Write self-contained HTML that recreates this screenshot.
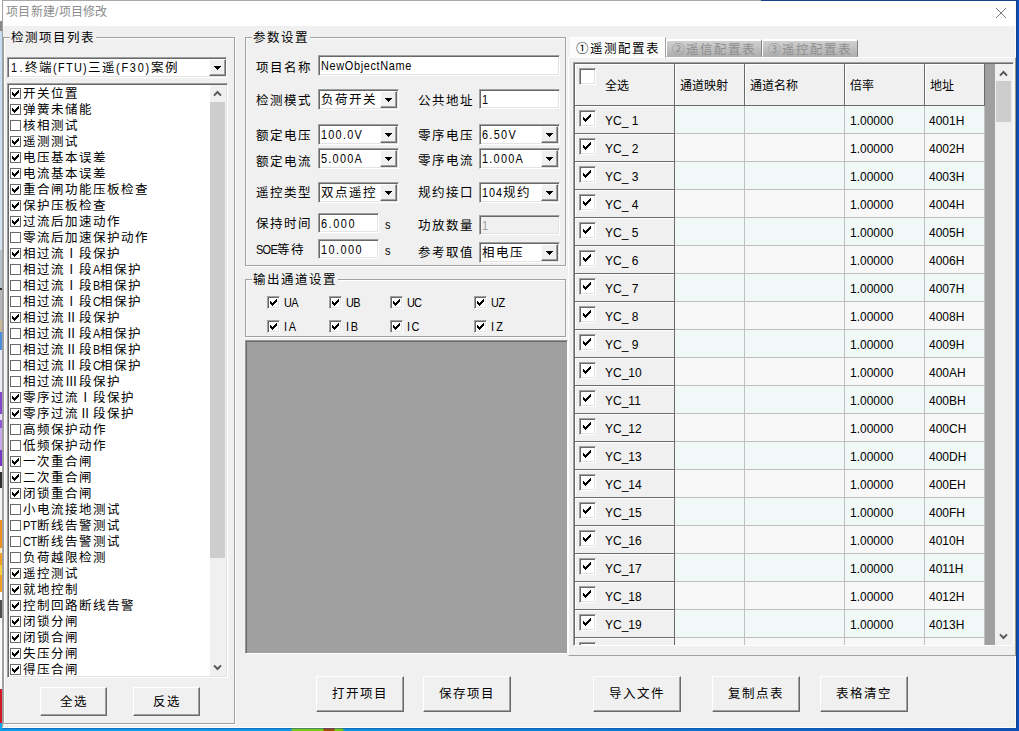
<!DOCTYPE html><html lang="zh-CN"><head><meta charset="utf-8"><title>项目新建/项目修改</title><style>
*{box-sizing:border-box;margin:0;padding:0}
html,body{width:1019px;height:731px;overflow:hidden}
body{position:relative;background:#0a4fc0;font-family:"Liberation Sans",sans-serif;font-size:12.5px;color:#000;line-height:1}
.a{position:absolute}
.l{display:inline-block;font-family:"Liberation Sans",sans-serif;font-size:13px;transform:scaleX(.84);transform-origin:0 50%;position:relative;top:0;white-space:nowrap}
.c{letter-spacing:1px;white-space:nowrap}
#win{left:2px;top:0;width:1014px;height:728px;background:#f0f0f0;border-left:1px solid #a0a0a0;border-top:1px solid #a8a8a8;border-right:1px solid #fffbf5;border-bottom:1px solid #fffbf5}
#title{left:3px;top:1px;width:1012px;height:25px;background:#fff}
#ttext{left:6px;top:6px;font-size:12px;color:#8c8c8c;white-space:nowrap;letter-spacing:.25px}
.gb{border:1px solid #a0a0a0;box-shadow:1px 1px 0 #fff, inset 1px 1px 0 #fff}
.gbl{background:#f0f0f0;padding:0 1px 0 1px;height:14px;line-height:14px;margin-top:1px}
.sunk{border:1px solid;border-color:#a0a0a0 #fff #fff #a0a0a0;box-shadow:inset 1px 1px 0 #696969, inset -1px -1px 0 #e3e3e3;background:#fff}
.btn{background:#f0f0f0;border:1px solid;border-color:#fff #696969 #696969 #fff;box-shadow:inset -1px -1px 0 #a0a0a0;text-align:center;letter-spacing:1px;white-space:nowrap}
.dd{width:17px;height:17px;background:#f0f0f0;border:1px solid;border-color:#fff #696969 #696969 #fff;box-shadow:inset -1px -1px 0 #a0a0a0}
.dd:after{content:"";position:absolute;left:4px;top:6px;width:7px;height:4px;background:linear-gradient(#000,#000) 0 0/7px 1px no-repeat,linear-gradient(#000,#000) 1px 1px/5px 1px no-repeat,linear-gradient(#000,#000) 2px 2px/3px 1px no-repeat,linear-gradient(#000,#000) 3px 3px/1px 1px no-repeat}
.cb{width:11px;height:11px;border:1px solid #6a6a6a;background:#fff}
.cb3{width:13px;height:13px;border:1px solid;border-color:#a0a0a0 #fff #fff #a0a0a0;box-shadow:inset 1px 1px 0 #696969, inset -1px -1px 0 #e3e3e3;background:#fff}
.cb4{width:17px;height:17px;border:1px solid;border-color:#a0a0a0 #fff #fff #a0a0a0;box-shadow:inset 1px 1px 0 #696969, inset -1px -1px 0 #e3e3e3;background:#fff}
svg.ck{position:absolute;left:0;top:0;width:100%;height:100%;fill:none;stroke:#000;stroke-width:2}
svg.ckp{position:absolute;left:1px;top:1px;fill:#000}
.cb3 svg.ckp{left:2px;top:2px}
.cb4 svg.ckp{left:3px;top:3px}
.it{left:0;height:16px;line-height:16px;white-space:nowrap;letter-spacing:1px;margin-top:1px}
.lab{white-space:nowrap;letter-spacing:1px;height:14px;line-height:14px;margin-top:1px}
.tx{white-space:nowrap;height:14px;line-height:14px;margin-top:1px}
.t{font-size:12px;white-space:nowrap;height:14px;line-height:14px}
.hc{background:#f0f0f0;border-right:1px solid #696969;border-bottom:1px solid #696969;box-shadow:inset 1px 1px 0 #fff}
.rc{border-right:1px solid #c0c0c0;border-bottom:1px solid #c0c0c0}
</style></head><body>
<div class="a" style="left:0;top:0;width:2px;height:731px;background:linear-gradient(#fff 0px,#fff 21px,#8a8a8a 21px,#8a8a8a 31px,#c4dcf4 31px,#d4e4f4 250px,#b8c0c8 250px,#b8c0c8 288px,#303030 288px,#303030 290px,#b4b8bc 290px,#b4b8bc 320px,#c8b898 320px,#c8b898 332px,#4a90e0 332px,#4a90e0 350px,#ececf4 350px,#ececf4 392px,#8448d0 392px,#8448d0 414px,#e8e0f8 414px,#e8e0f8 420px,#9058d8 420px,#9058d8 428px,#c8a8ec 428px,#c8a8ec 450px,#7838c8 450px,#7838c8 466px,#fff 466px,#fff 472px,#303030 472px,#303030 488px,#f4f4f4 488px,#f4f4f4 520px,#f09020 520px,#f09020 548px,#fff0d0 548px,#fff0d0 553px,#f0a028 553px,#f0a028 565px,#f8d040 565px,#f8d040 575px,#f0a028 575px,#f0a028 592px,#fff 592px,#fff 600px,#505050 600px,#505050 618px,#fafafa 618px,#fafafa 689px,#d01828 689px,#d01828 723px,#10a8f0 723px,#10a8f0 731px)"></div>
<div class="a" style="left:0;top:728px;width:1019px;height:3px;background:linear-gradient(90deg,#0c9cec 0,#0c98e8 290px,#78c820 293px,#78c820 323px,#a04810 324px,#a04810 334px,#78c820 335px,#78c820 342px,#0c90e0 345px,#0a78d4 600px,#0a50b8 1019px)"></div>
<div class="a" style="left:3px;top:728px;width:1014px;height:1px;background:#1a4a90;opacity:.5"></div>
<div class="a" style="left:1016px;top:0;width:1px;height:729px;background:#1a3f88"></div>
<div class="a" id="win"></div>
<div class="a" style="left:761px;top:0;width:256px;height:1px;background:#1c3f8c"></div>
<div class="a" id="title"></div>
<div class="a" id="ttext">项目新建/项目修改</div>
<svg class="a" style="left:995px;top:7px" width="12" height="12" viewBox="0 0 12 12"><path d="M1 1L11 11M11 1L1 11" stroke="#787878" stroke-width="1" fill="none"/></svg>
<div class="a gb" style="left:3px;top:37px;width:232px;height:687px"></div>
<div class="a gbl c" style="left:10px;top:30px">检测项目列表</div>
<div class="a sunk" style="left:7px;top:57px;width:220px;height:21px"></div>
<div class="a tx c" style="left:11px;top:60px"><span class="l" style="letter-spacing:2.91px;margin-right:-2.67px">1.</span>终端<span class="l" style="letter-spacing:1.55px;margin-right:-6.67px">(FTU)</span>三遥<span class="l" style="letter-spacing:2.12px;margin-right:-6.67px">(F30)</span>案例</div>
<div class="a dd" style="left:209px;top:59px"></div>
<div class="a sunk" style="left:7px;top:83px;width:221px;height:595px"></div>
<div class="a" style="left:9px;top:85px;width:200px;height:591px;overflow:hidden">
<div class="a cb" style="left:1px;top:3px"><svg class="ckp" width="7" height="7" viewBox="0 0 7 7" shape-rendering="crispEdges"><path d="M0 2v3h1v-3zM1 3v3h1v-3zM2 4v3h1v-3zM3 3v3h1v-3zM4 2v3h1v-3zM5 1v3h1v-3zM6 0v3h1v-3z"/></svg></div><div class="a it" style="left:14px;top:0px">开关位置</div>
<div class="a cb" style="left:1px;top:19px"><svg class="ckp" width="7" height="7" viewBox="0 0 7 7" shape-rendering="crispEdges"><path d="M0 2v3h1v-3zM1 3v3h1v-3zM2 4v3h1v-3zM3 3v3h1v-3zM4 2v3h1v-3zM5 1v3h1v-3zM6 0v3h1v-3z"/></svg></div><div class="a it" style="left:14px;top:16px">弹簧未储能</div>
<div class="a cb" style="left:1px;top:35px"></div><div class="a it" style="left:14px;top:32px">核相测试</div>
<div class="a cb" style="left:1px;top:51px"><svg class="ckp" width="7" height="7" viewBox="0 0 7 7" shape-rendering="crispEdges"><path d="M0 2v3h1v-3zM1 3v3h1v-3zM2 4v3h1v-3zM3 3v3h1v-3zM4 2v3h1v-3zM5 1v3h1v-3zM6 0v3h1v-3z"/></svg></div><div class="a it" style="left:14px;top:48px">遥测测试</div>
<div class="a cb" style="left:1px;top:67px"><svg class="ckp" width="7" height="7" viewBox="0 0 7 7" shape-rendering="crispEdges"><path d="M0 2v3h1v-3zM1 3v3h1v-3zM2 4v3h1v-3zM3 3v3h1v-3zM4 2v3h1v-3zM5 1v3h1v-3zM6 0v3h1v-3z"/></svg></div><div class="a it" style="left:14px;top:64px">电压基本误差</div>
<div class="a cb" style="left:1px;top:83px"><svg class="ckp" width="7" height="7" viewBox="0 0 7 7" shape-rendering="crispEdges"><path d="M0 2v3h1v-3zM1 3v3h1v-3zM2 4v3h1v-3zM3 3v3h1v-3zM4 2v3h1v-3zM5 1v3h1v-3zM6 0v3h1v-3z"/></svg></div><div class="a it" style="left:14px;top:80px">电流基本误差</div>
<div class="a cb" style="left:1px;top:99px"><svg class="ckp" width="7" height="7" viewBox="0 0 7 7" shape-rendering="crispEdges"><path d="M0 2v3h1v-3zM1 3v3h1v-3zM2 4v3h1v-3zM3 3v3h1v-3zM4 2v3h1v-3zM5 1v3h1v-3zM6 0v3h1v-3z"/></svg></div><div class="a it" style="left:14px;top:96px">重合闸功能压板检查</div>
<div class="a cb" style="left:1px;top:115px"><svg class="ckp" width="7" height="7" viewBox="0 0 7 7" shape-rendering="crispEdges"><path d="M0 2v3h1v-3zM1 3v3h1v-3zM2 4v3h1v-3zM3 3v3h1v-3zM4 2v3h1v-3zM5 1v3h1v-3zM6 0v3h1v-3z"/></svg></div><div class="a it" style="left:14px;top:112px">保护压板检查</div>
<div class="a cb" style="left:1px;top:131px"><svg class="ckp" width="7" height="7" viewBox="0 0 7 7" shape-rendering="crispEdges"><path d="M0 2v3h1v-3zM1 3v3h1v-3zM2 4v3h1v-3zM3 3v3h1v-3zM4 2v3h1v-3zM5 1v3h1v-3zM6 0v3h1v-3z"/></svg></div><div class="a it" style="left:14px;top:128px">过流后加速动作</div>
<div class="a cb" style="left:1px;top:147px"></div><div class="a it" style="left:14px;top:144px">零流后加速保护动作</div>
<div class="a cb" style="left:1px;top:163px"><svg class="ckp" width="7" height="7" viewBox="0 0 7 7" shape-rendering="crispEdges"><path d="M0 2v3h1v-3zM1 3v3h1v-3zM2 4v3h1v-3zM3 3v3h1v-3zM4 2v3h1v-3zM5 1v3h1v-3zM6 0v3h1v-3z"/></svg></div><div class="a it" style="left:14px;top:160px">相过流Ⅰ段保护</div>
<div class="a cb" style="left:1px;top:179px"></div><div class="a it" style="left:14px;top:176px">相过流Ⅰ段<span class="l" style="letter-spacing:-0.34px;margin-right:-1.33px">A</span>相保护</div>
<div class="a cb" style="left:1px;top:195px"></div><div class="a it" style="left:14px;top:192px">相过流Ⅰ段<span class="l" style="letter-spacing:-0.34px;margin-right:-1.33px">B</span>相保护</div>
<div class="a cb" style="left:1px;top:211px"></div><div class="a it" style="left:14px;top:208px">相过流Ⅰ段<span class="l" style="letter-spacing:-1.05px;margin-right:-1.33px">C</span>相保护</div>
<div class="a cb" style="left:1px;top:227px"><svg class="ckp" width="7" height="7" viewBox="0 0 7 7" shape-rendering="crispEdges"><path d="M0 2v3h1v-3zM1 3v3h1v-3zM2 4v3h1v-3zM3 3v3h1v-3zM4 2v3h1v-3zM5 1v3h1v-3zM6 0v3h1v-3z"/></svg></div><div class="a it" style="left:14px;top:224px">相过流Ⅱ段保护</div>
<div class="a cb" style="left:1px;top:243px"></div><div class="a it" style="left:14px;top:240px">相过流Ⅱ段<span class="l" style="letter-spacing:-0.34px;margin-right:-1.33px">A</span>相保护</div>
<div class="a cb" style="left:1px;top:259px"></div><div class="a it" style="left:14px;top:256px">相过流Ⅱ段<span class="l" style="letter-spacing:-0.34px;margin-right:-1.33px">B</span>相保护</div>
<div class="a cb" style="left:1px;top:275px"></div><div class="a it" style="left:14px;top:272px">相过流Ⅱ段<span class="l" style="letter-spacing:-1.05px;margin-right:-1.33px">C</span>相保护</div>
<div class="a cb" style="left:1px;top:291px"></div><div class="a it" style="left:14px;top:288px">相过流Ⅲ段保护</div>
<div class="a cb" style="left:1px;top:307px"><svg class="ckp" width="7" height="7" viewBox="0 0 7 7" shape-rendering="crispEdges"><path d="M0 2v3h1v-3zM1 3v3h1v-3zM2 4v3h1v-3zM3 3v3h1v-3zM4 2v3h1v-3zM5 1v3h1v-3zM6 0v3h1v-3z"/></svg></div><div class="a it" style="left:14px;top:304px">零序过流Ⅰ段保护</div>
<div class="a cb" style="left:1px;top:323px"><svg class="ckp" width="7" height="7" viewBox="0 0 7 7" shape-rendering="crispEdges"><path d="M0 2v3h1v-3zM1 3v3h1v-3zM2 4v3h1v-3zM3 3v3h1v-3zM4 2v3h1v-3zM5 1v3h1v-3zM6 0v3h1v-3z"/></svg></div><div class="a it" style="left:14px;top:320px">零序过流Ⅱ段保护</div>
<div class="a cb" style="left:1px;top:339px"></div><div class="a it" style="left:14px;top:336px">高频保护动作</div>
<div class="a cb" style="left:1px;top:355px"></div><div class="a it" style="left:14px;top:352px">低频保护动作</div>
<div class="a cb" style="left:1px;top:371px"><svg class="ckp" width="7" height="7" viewBox="0 0 7 7" shape-rendering="crispEdges"><path d="M0 2v3h1v-3zM1 3v3h1v-3zM2 4v3h1v-3zM3 3v3h1v-3zM4 2v3h1v-3zM5 1v3h1v-3zM6 0v3h1v-3z"/></svg></div><div class="a it" style="left:14px;top:368px">一次重合闸</div>
<div class="a cb" style="left:1px;top:387px"><svg class="ckp" width="7" height="7" viewBox="0 0 7 7" shape-rendering="crispEdges"><path d="M0 2v3h1v-3zM1 3v3h1v-3zM2 4v3h1v-3zM3 3v3h1v-3zM4 2v3h1v-3zM5 1v3h1v-3zM6 0v3h1v-3z"/></svg></div><div class="a it" style="left:14px;top:384px">二次重合闸</div>
<div class="a cb" style="left:1px;top:403px"><svg class="ckp" width="7" height="7" viewBox="0 0 7 7" shape-rendering="crispEdges"><path d="M0 2v3h1v-3zM1 3v3h1v-3zM2 4v3h1v-3zM3 3v3h1v-3zM4 2v3h1v-3zM5 1v3h1v-3zM6 0v3h1v-3z"/></svg></div><div class="a it" style="left:14px;top:400px">闭锁重合闸</div>
<div class="a cb" style="left:1px;top:419px"></div><div class="a it" style="left:14px;top:416px">小电流接地测试</div>
<div class="a cb" style="left:1px;top:435px"></div><div class="a it" style="left:14px;top:432px"><span class="l" style="letter-spacing:0.03px;margin-right:-2.67px">PT</span>断线告警测试</div>
<div class="a cb" style="left:1px;top:451px"></div><div class="a it" style="left:14px;top:448px"><span class="l" style="letter-spacing:-0.33px;margin-right:-2.67px">CT</span>断线告警测试</div>
<div class="a cb" style="left:1px;top:467px"></div><div class="a it" style="left:14px;top:464px">负荷越限检测</div>
<div class="a cb" style="left:1px;top:483px"><svg class="ckp" width="7" height="7" viewBox="0 0 7 7" shape-rendering="crispEdges"><path d="M0 2v3h1v-3zM1 3v3h1v-3zM2 4v3h1v-3zM3 3v3h1v-3zM4 2v3h1v-3zM5 1v3h1v-3zM6 0v3h1v-3z"/></svg></div><div class="a it" style="left:14px;top:480px">遥控测试</div>
<div class="a cb" style="left:1px;top:499px"><svg class="ckp" width="7" height="7" viewBox="0 0 7 7" shape-rendering="crispEdges"><path d="M0 2v3h1v-3zM1 3v3h1v-3zM2 4v3h1v-3zM3 3v3h1v-3zM4 2v3h1v-3zM5 1v3h1v-3zM6 0v3h1v-3z"/></svg></div><div class="a it" style="left:14px;top:496px">就地控制</div>
<div class="a cb" style="left:1px;top:515px"><svg class="ckp" width="7" height="7" viewBox="0 0 7 7" shape-rendering="crispEdges"><path d="M0 2v3h1v-3zM1 3v3h1v-3zM2 4v3h1v-3zM3 3v3h1v-3zM4 2v3h1v-3zM5 1v3h1v-3zM6 0v3h1v-3z"/></svg></div><div class="a it" style="left:14px;top:512px">控制回路断线告警</div>
<div class="a cb" style="left:1px;top:531px"><svg class="ckp" width="7" height="7" viewBox="0 0 7 7" shape-rendering="crispEdges"><path d="M0 2v3h1v-3zM1 3v3h1v-3zM2 4v3h1v-3zM3 3v3h1v-3zM4 2v3h1v-3zM5 1v3h1v-3zM6 0v3h1v-3z"/></svg></div><div class="a it" style="left:14px;top:528px">闭锁分闸</div>
<div class="a cb" style="left:1px;top:547px"><svg class="ckp" width="7" height="7" viewBox="0 0 7 7" shape-rendering="crispEdges"><path d="M0 2v3h1v-3zM1 3v3h1v-3zM2 4v3h1v-3zM3 3v3h1v-3zM4 2v3h1v-3zM5 1v3h1v-3zM6 0v3h1v-3z"/></svg></div><div class="a it" style="left:14px;top:544px">闭锁合闸</div>
<div class="a cb" style="left:1px;top:563px"><svg class="ckp" width="7" height="7" viewBox="0 0 7 7" shape-rendering="crispEdges"><path d="M0 2v3h1v-3zM1 3v3h1v-3zM2 4v3h1v-3zM3 3v3h1v-3zM4 2v3h1v-3zM5 1v3h1v-3zM6 0v3h1v-3z"/></svg></div><div class="a it" style="left:14px;top:560px">失压分闸</div>
<div class="a cb" style="left:1px;top:579px"><svg class="ckp" width="7" height="7" viewBox="0 0 7 7" shape-rendering="crispEdges"><path d="M0 2v3h1v-3zM1 3v3h1v-3zM2 4v3h1v-3zM3 3v3h1v-3zM4 2v3h1v-3zM5 1v3h1v-3zM6 0v3h1v-3z"/></svg></div><div class="a it" style="left:14px;top:576px">得压合闸</div>
</div>
<div class="a" style="left:210px;top:85px;width:16px;height:591px;background:#f0f0f0"></div>
<div class="a" style="left:210px;top:102px;width:15px;height:456px;background:#cdcdcd"></div>
<svg class="a" style="left:213px;top:90px" width="9" height="7" viewBox="0 0 9 7"><path d="M1 5.6L4.5 2L8 5.6" stroke="#585858" stroke-width="2" fill="none"/></svg>
<svg class="a" style="left:213px;top:664px" width="9" height="7" viewBox="0 0 9 7"><path d="M1 1.4L4.5 5L8 1.4" stroke="#585858" stroke-width="2" fill="none"/></svg>
<div class="a btn" style="left:40px;top:687px;width:67px;height:29px;line-height:28px">全选</div>
<div class="a btn" style="left:133px;top:687px;width:67px;height:29px;line-height:28px">反选</div>
<div class="a gb" style="left:245px;top:37px;width:321px;height:229px"></div>
<div class="a gbl c" style="left:252px;top:30px">参数设置</div>
<div class="a lab" style="left:256px;top:60px">项目名称</div>
<div class="a lab" style="left:256px;top:93px">检测模式</div>
<div class="a lab" style="left:256px;top:128px">额定电压</div>
<div class="a lab" style="left:256px;top:154px">额定电流</div>
<div class="a lab" style="left:256px;top:185px">遥控类型</div>
<div class="a lab" style="left:256px;top:216px">保持时间</div>
<div class="a lab" style="left:256px;top:242px"><span class="l" style="letter-spacing:-0.82px;margin-right:-4.00px">SOE</span>等待</div>
<div class="a lab" style="left:418px;top:93px">公共地址</div>
<div class="a lab" style="left:418px;top:128px">零序电压</div>
<div class="a lab" style="left:418px;top:153px">零序电流</div>
<div class="a lab" style="left:418px;top:185px">规约接口</div>
<div class="a lab" style="left:418px;top:218px">功放数量</div>
<div class="a lab" style="left:418px;top:245px">参考取值</div>
<div class="a sunk" style="left:318px;top:55px;width:242px;height:21px"></div>
<div class="a tx c" style="left:321px;top:58px"><span class="l" style="letter-spacing:0.78px;margin-right:-17.33px">NewObjectName</span></div>
<div class="a sunk" style="left:318px;top:89px;width:81px;height:21px"></div>
<div class="a tx c" style="left:321px;top:92px">负荷开关</div>
<div class="a dd" style="left:380px;top:91px"></div>
<div class="a sunk" style="left:479px;top:89px;width:81px;height:20px"></div>
<div class="a tx c" style="left:482px;top:92px"><span class="l" style="letter-spacing:1.10px;margin-right:-1.33px">1</span></div>
<div class="a sunk" style="left:318px;top:124px;width:81px;height:21px"></div>
<div class="a tx c" style="left:321px;top:127px"><span class="l" style="letter-spacing:1.47px;margin-right:-8.00px">100.0V</span></div>
<div class="a dd" style="left:380px;top:126px"></div>
<div class="a sunk" style="left:479px;top:124px;width:81px;height:21px"></div>
<div class="a tx c" style="left:482px;top:127px"><span class="l" style="letter-spacing:1.54px;margin-right:-6.67px">6.50V</span></div>
<div class="a dd" style="left:541px;top:126px"></div>
<div class="a sunk" style="left:318px;top:148px;width:81px;height:21px"></div>
<div class="a tx c" style="left:321px;top:151px"><span class="l" style="letter-spacing:1.47px;margin-right:-8.00px">5.000A</span></div>
<div class="a dd" style="left:380px;top:150px"></div>
<div class="a sunk" style="left:479px;top:148px;width:81px;height:21px"></div>
<div class="a tx c" style="left:482px;top:151px"><span class="l" style="letter-spacing:1.47px;margin-right:-8.00px">1.000A</span></div>
<div class="a dd" style="left:541px;top:150px"></div>
<div class="a sunk" style="left:318px;top:182px;width:81px;height:21px"></div>
<div class="a tx c" style="left:321px;top:185px">双点遥控</div>
<div class="a dd" style="left:380px;top:184px"></div>
<div class="a sunk" style="left:479px;top:182px;width:81px;height:21px"></div>
<div class="a tx c" style="left:482px;top:185px"><span class="l" style="letter-spacing:1.10px;margin-right:-4.00px">104</span>规约</div>
<div class="a dd" style="left:541px;top:184px"></div>
<div class="a sunk" style="left:318px;top:213px;width:61px;height:20px"></div>
<div class="a tx c" style="left:321px;top:216px"><span class="l" style="letter-spacing:1.83px;margin-right:-6.67px">6.000</span></div>
<div class="a sunk" style="left:479px;top:215px;width:81px;height:20px;background:#f0f0f0"></div>
<div class="a tx c" style="left:482px;top:218px;color:#a0a0a0"><span class="l" style="letter-spacing:1.10px;margin-right:-1.33px">1</span></div>
<div class="a sunk" style="left:318px;top:239px;width:61px;height:20px"></div>
<div class="a tx c" style="left:321px;top:242px"><span class="l" style="letter-spacing:1.71px;margin-right:-8.00px">10.000</span></div>
<div class="a sunk" style="left:479px;top:242px;width:81px;height:21px"></div>
<div class="a tx c" style="left:482px;top:245px">相电压</div>
<div class="a dd" style="left:541px;top:244px"></div>
<div class="a tx" style="left:385px;top:217px"><span class="l" style="letter-spacing:1.83px;margin-right:-1.33px">s</span></div>
<div class="a tx" style="left:385px;top:243px"><span class="l" style="letter-spacing:1.83px;margin-right:-1.33px">s</span></div>
<div class="a gb" style="left:245px;top:279px;width:321px;height:58px"></div>
<div class="a gbl c" style="left:252px;top:272px">输出通道设置</div>
<div class="a cb3" style="left:267px;top:296px"><svg class="ckp" width="7" height="7" viewBox="0 0 7 7" shape-rendering="crispEdges"><path d="M0 2v3h1v-3zM1 3v3h1v-3zM2 4v3h1v-3zM3 3v3h1v-3zM4 2v3h1v-3zM5 1v3h1v-3zM6 0v3h1v-3z"/></svg></div><div class="a tx" style="left:284px;top:295px"><span class="l" style="letter-spacing:-0.70px;margin-right:-2.67px">UA</span></div>
<div class="a cb3" style="left:329px;top:296px"><svg class="ckp" width="7" height="7" viewBox="0 0 7 7" shape-rendering="crispEdges"><path d="M0 2v3h1v-3zM1 3v3h1v-3zM2 4v3h1v-3zM3 3v3h1v-3zM4 2v3h1v-3zM5 1v3h1v-3zM6 0v3h1v-3z"/></svg></div><div class="a tx" style="left:346px;top:295px"><span class="l" style="letter-spacing:-0.70px;margin-right:-2.67px">UB</span></div>
<div class="a cb3" style="left:390px;top:296px"><svg class="ckp" width="7" height="7" viewBox="0 0 7 7" shape-rendering="crispEdges"><path d="M0 2v3h1v-3zM1 3v3h1v-3zM2 4v3h1v-3zM3 3v3h1v-3zM4 2v3h1v-3zM5 1v3h1v-3zM6 0v3h1v-3z"/></svg></div><div class="a tx" style="left:407px;top:295px"><span class="l" style="letter-spacing:-1.05px;margin-right:-2.67px">UC</span></div>
<div class="a cb3" style="left:474px;top:296px"><svg class="ckp" width="7" height="7" viewBox="0 0 7 7" shape-rendering="crispEdges"><path d="M0 2v3h1v-3zM1 3v3h1v-3zM2 4v3h1v-3zM3 3v3h1v-3zM4 2v3h1v-3zM5 1v3h1v-3zM6 0v3h1v-3z"/></svg></div><div class="a tx" style="left:491px;top:295px"><span class="l" style="letter-spacing:-0.33px;margin-right:-2.67px">UZ</span></div>
<div class="a cb3" style="left:267px;top:320px"><svg class="ckp" width="7" height="7" viewBox="0 0 7 7" shape-rendering="crispEdges"><path d="M0 2v3h1v-3zM1 3v3h1v-3zM2 4v3h1v-3zM3 3v3h1v-3zM4 2v3h1v-3zM5 1v3h1v-3zM6 0v3h1v-3z"/></svg></div><div class="a tx" style="left:284px;top:319px"><span class="l" style="letter-spacing:2.19px;margin-right:-2.67px">IA</span></div>
<div class="a cb3" style="left:329px;top:320px"><svg class="ckp" width="7" height="7" viewBox="0 0 7 7" shape-rendering="crispEdges"><path d="M0 2v3h1v-3zM1 3v3h1v-3zM2 4v3h1v-3zM3 3v3h1v-3zM4 2v3h1v-3zM5 1v3h1v-3zM6 0v3h1v-3z"/></svg></div><div class="a tx" style="left:346px;top:319px"><span class="l" style="letter-spacing:2.19px;margin-right:-2.67px">IB</span></div>
<div class="a cb3" style="left:390px;top:320px"><svg class="ckp" width="7" height="7" viewBox="0 0 7 7" shape-rendering="crispEdges"><path d="M0 2v3h1v-3zM1 3v3h1v-3zM2 4v3h1v-3zM3 3v3h1v-3zM4 2v3h1v-3zM5 1v3h1v-3zM6 0v3h1v-3z"/></svg></div><div class="a tx" style="left:407px;top:319px"><span class="l" style="letter-spacing:1.83px;margin-right:-2.67px">IC</span></div>
<div class="a cb3" style="left:474px;top:320px"><svg class="ckp" width="7" height="7" viewBox="0 0 7 7" shape-rendering="crispEdges"><path d="M0 2v3h1v-3zM1 3v3h1v-3zM2 4v3h1v-3zM3 3v3h1v-3zM4 2v3h1v-3zM5 1v3h1v-3zM6 0v3h1v-3z"/></svg></div><div class="a tx" style="left:491px;top:319px"><span class="l" style="letter-spacing:2.56px;margin-right:-2.67px">IZ</span></div>
<div class="a" style="left:245px;top:340px;width:323px;height:314px;background:#a0a0a0;border:1px solid;border-color:#989898 #fff #fff #989898;box-shadow:inset 1px 1px 0 #696969"></div>
<div class="a btn" style="left:316px;top:676px;width:88px;height:36px;line-height:35px">打开项目</div>
<div class="a btn" style="left:423px;top:676px;width:88px;height:36px;line-height:35px">保存项目</div>
<div class="a" style="left:568px;top:57px;width:448px;height:599px;border:1px solid;border-color:#fff #a09c90 #a0a0a0 #fff"></div>
<div class="a" style="left:570px;top:37px;width:96px;height:21px;background:#fcfcfc;border:1px solid;border-color:#fff #a0a0a0 transparent #fff"></div>
<div class="a tx c" style="left:576px;top:41px">①遥测配置表</div>
<div class="a" style="left:666px;top:39px;width:96px;height:18px;background:linear-gradient(#d0d0d0,#b0b0b0);border:1px solid;border-color:#fff #808080 #b0b0b0 #fff;border-top-width:2px"></div>
<div class="a tx c" style="left:672px;top:42px;color:#8e8e8e">②遥信配置表</div>
<div class="a" style="left:762px;top:39px;width:96px;height:18px;background:linear-gradient(#d0d0d0,#b0b0b0);border:1px solid;border-color:#fff #808080 #b0b0b0 #fff;border-top-width:2px"></div>
<div class="a tx c" style="left:768px;top:42px;color:#8e8e8e">③遥控配置表</div>
<div class="a" style="left:573px;top:62px;width:441px;height:584px;border:1px solid;border-color:#a0a0a0 #fff #fff #a0a0a0;box-shadow:inset 1px 1px 0 #696969;background:#f0f0f0"></div>
<div class="a" style="left:575px;top:64px;width:420px;height:581px;background:#a0a0a0;overflow:hidden">
<div class="a hc" style="left:0px;top:0;width:100px;height:42px"></div><div class="a t" style="left:30px;top:15px">全选</div>
<div class="a hc" style="left:100px;top:0;width:70px;height:42px"></div><div class="a t" style="left:105px;top:15px">通道映射</div>
<div class="a hc" style="left:170px;top:0;width:100px;height:42px"></div><div class="a t" style="left:175px;top:15px">通道名称</div>
<div class="a hc" style="left:270px;top:0;width:80px;height:42px"></div><div class="a t" style="left:275px;top:15px">倍率</div>
<div class="a hc" style="left:350px;top:0;width:60px;height:42px"></div><div class="a t" style="left:355px;top:15px">地址</div>
<div class="a cb4" style="left:4px;top:4px"></div>
<div class="a hc" style="left:0;top:42px;width:100px;height:28px"></div>
<div class="a cb4" style="left:4px;top:46px"><svg class="ckp" width="8" height="8" viewBox="0 0 8 8" shape-rendering="crispEdges"><path d="M0 3v3h1v-3zM1 4v3h1v-3zM2 5v3h1v-3zM3 4v3h1v-3zM4 3v3h1v-3zM5 2v3h1v-3zM6 1v3h1v-3zM7 0v3h1v-3z"/></svg></div>
<div class="a t" style="left:30px;top:50px">YC_&nbsp;1</div>
<div class="a rc" style="left:100px;top:42px;width:70px;height:28px;background:#f0f8f8"></div>
<div class="a rc" style="left:170px;top:42px;width:100px;height:28px;background:#f0f8f8"></div>
<div class="a rc" style="left:270px;top:42px;width:80px;height:28px;background:#f0f8f8"></div>
<div class="a rc" style="left:350px;top:42px;width:60px;height:28px;background:#f0f8f8"></div>
<div class="a t" style="left:275px;top:50px">1.00000</div>
<div class="a t" style="left:354px;top:50px">4001H</div>
<div class="a hc" style="left:0;top:70px;width:100px;height:28px"></div>
<div class="a cb4" style="left:4px;top:74px"><svg class="ckp" width="8" height="8" viewBox="0 0 8 8" shape-rendering="crispEdges"><path d="M0 3v3h1v-3zM1 4v3h1v-3zM2 5v3h1v-3zM3 4v3h1v-3zM4 3v3h1v-3zM5 2v3h1v-3zM6 1v3h1v-3zM7 0v3h1v-3z"/></svg></div>
<div class="a t" style="left:30px;top:78px">YC_&nbsp;2</div>
<div class="a rc" style="left:100px;top:70px;width:70px;height:28px;background:#f8f8f8"></div>
<div class="a rc" style="left:170px;top:70px;width:100px;height:28px;background:#f8f8f8"></div>
<div class="a rc" style="left:270px;top:70px;width:80px;height:28px;background:#f8f8f8"></div>
<div class="a rc" style="left:350px;top:70px;width:60px;height:28px;background:#f8f8f8"></div>
<div class="a t" style="left:275px;top:78px">1.00000</div>
<div class="a t" style="left:354px;top:78px">4002H</div>
<div class="a hc" style="left:0;top:98px;width:100px;height:28px"></div>
<div class="a cb4" style="left:4px;top:102px"><svg class="ckp" width="8" height="8" viewBox="0 0 8 8" shape-rendering="crispEdges"><path d="M0 3v3h1v-3zM1 4v3h1v-3zM2 5v3h1v-3zM3 4v3h1v-3zM4 3v3h1v-3zM5 2v3h1v-3zM6 1v3h1v-3zM7 0v3h1v-3z"/></svg></div>
<div class="a t" style="left:30px;top:106px">YC_&nbsp;3</div>
<div class="a rc" style="left:100px;top:98px;width:70px;height:28px;background:#f0f8f8"></div>
<div class="a rc" style="left:170px;top:98px;width:100px;height:28px;background:#f0f8f8"></div>
<div class="a rc" style="left:270px;top:98px;width:80px;height:28px;background:#f0f8f8"></div>
<div class="a rc" style="left:350px;top:98px;width:60px;height:28px;background:#f0f8f8"></div>
<div class="a t" style="left:275px;top:106px">1.00000</div>
<div class="a t" style="left:354px;top:106px">4003H</div>
<div class="a hc" style="left:0;top:126px;width:100px;height:28px"></div>
<div class="a cb4" style="left:4px;top:130px"><svg class="ckp" width="8" height="8" viewBox="0 0 8 8" shape-rendering="crispEdges"><path d="M0 3v3h1v-3zM1 4v3h1v-3zM2 5v3h1v-3zM3 4v3h1v-3zM4 3v3h1v-3zM5 2v3h1v-3zM6 1v3h1v-3zM7 0v3h1v-3z"/></svg></div>
<div class="a t" style="left:30px;top:134px">YC_&nbsp;4</div>
<div class="a rc" style="left:100px;top:126px;width:70px;height:28px;background:#f8f8f8"></div>
<div class="a rc" style="left:170px;top:126px;width:100px;height:28px;background:#f8f8f8"></div>
<div class="a rc" style="left:270px;top:126px;width:80px;height:28px;background:#f8f8f8"></div>
<div class="a rc" style="left:350px;top:126px;width:60px;height:28px;background:#f8f8f8"></div>
<div class="a t" style="left:275px;top:134px">1.00000</div>
<div class="a t" style="left:354px;top:134px">4004H</div>
<div class="a hc" style="left:0;top:154px;width:100px;height:28px"></div>
<div class="a cb4" style="left:4px;top:158px"><svg class="ckp" width="8" height="8" viewBox="0 0 8 8" shape-rendering="crispEdges"><path d="M0 3v3h1v-3zM1 4v3h1v-3zM2 5v3h1v-3zM3 4v3h1v-3zM4 3v3h1v-3zM5 2v3h1v-3zM6 1v3h1v-3zM7 0v3h1v-3z"/></svg></div>
<div class="a t" style="left:30px;top:162px">YC_&nbsp;5</div>
<div class="a rc" style="left:100px;top:154px;width:70px;height:28px;background:#f0f8f8"></div>
<div class="a rc" style="left:170px;top:154px;width:100px;height:28px;background:#f0f8f8"></div>
<div class="a rc" style="left:270px;top:154px;width:80px;height:28px;background:#f0f8f8"></div>
<div class="a rc" style="left:350px;top:154px;width:60px;height:28px;background:#f0f8f8"></div>
<div class="a t" style="left:275px;top:162px">1.00000</div>
<div class="a t" style="left:354px;top:162px">4005H</div>
<div class="a hc" style="left:0;top:182px;width:100px;height:28px"></div>
<div class="a cb4" style="left:4px;top:186px"><svg class="ckp" width="8" height="8" viewBox="0 0 8 8" shape-rendering="crispEdges"><path d="M0 3v3h1v-3zM1 4v3h1v-3zM2 5v3h1v-3zM3 4v3h1v-3zM4 3v3h1v-3zM5 2v3h1v-3zM6 1v3h1v-3zM7 0v3h1v-3z"/></svg></div>
<div class="a t" style="left:30px;top:190px">YC_&nbsp;6</div>
<div class="a rc" style="left:100px;top:182px;width:70px;height:28px;background:#f8f8f8"></div>
<div class="a rc" style="left:170px;top:182px;width:100px;height:28px;background:#f8f8f8"></div>
<div class="a rc" style="left:270px;top:182px;width:80px;height:28px;background:#f8f8f8"></div>
<div class="a rc" style="left:350px;top:182px;width:60px;height:28px;background:#f8f8f8"></div>
<div class="a t" style="left:275px;top:190px">1.00000</div>
<div class="a t" style="left:354px;top:190px">4006H</div>
<div class="a hc" style="left:0;top:210px;width:100px;height:28px"></div>
<div class="a cb4" style="left:4px;top:214px"><svg class="ckp" width="8" height="8" viewBox="0 0 8 8" shape-rendering="crispEdges"><path d="M0 3v3h1v-3zM1 4v3h1v-3zM2 5v3h1v-3zM3 4v3h1v-3zM4 3v3h1v-3zM5 2v3h1v-3zM6 1v3h1v-3zM7 0v3h1v-3z"/></svg></div>
<div class="a t" style="left:30px;top:218px">YC_&nbsp;7</div>
<div class="a rc" style="left:100px;top:210px;width:70px;height:28px;background:#f0f8f8"></div>
<div class="a rc" style="left:170px;top:210px;width:100px;height:28px;background:#f0f8f8"></div>
<div class="a rc" style="left:270px;top:210px;width:80px;height:28px;background:#f0f8f8"></div>
<div class="a rc" style="left:350px;top:210px;width:60px;height:28px;background:#f0f8f8"></div>
<div class="a t" style="left:275px;top:218px">1.00000</div>
<div class="a t" style="left:354px;top:218px">4007H</div>
<div class="a hc" style="left:0;top:238px;width:100px;height:28px"></div>
<div class="a cb4" style="left:4px;top:242px"><svg class="ckp" width="8" height="8" viewBox="0 0 8 8" shape-rendering="crispEdges"><path d="M0 3v3h1v-3zM1 4v3h1v-3zM2 5v3h1v-3zM3 4v3h1v-3zM4 3v3h1v-3zM5 2v3h1v-3zM6 1v3h1v-3zM7 0v3h1v-3z"/></svg></div>
<div class="a t" style="left:30px;top:246px">YC_&nbsp;8</div>
<div class="a rc" style="left:100px;top:238px;width:70px;height:28px;background:#f8f8f8"></div>
<div class="a rc" style="left:170px;top:238px;width:100px;height:28px;background:#f8f8f8"></div>
<div class="a rc" style="left:270px;top:238px;width:80px;height:28px;background:#f8f8f8"></div>
<div class="a rc" style="left:350px;top:238px;width:60px;height:28px;background:#f8f8f8"></div>
<div class="a t" style="left:275px;top:246px">1.00000</div>
<div class="a t" style="left:354px;top:246px">4008H</div>
<div class="a hc" style="left:0;top:266px;width:100px;height:28px"></div>
<div class="a cb4" style="left:4px;top:270px"><svg class="ckp" width="8" height="8" viewBox="0 0 8 8" shape-rendering="crispEdges"><path d="M0 3v3h1v-3zM1 4v3h1v-3zM2 5v3h1v-3zM3 4v3h1v-3zM4 3v3h1v-3zM5 2v3h1v-3zM6 1v3h1v-3zM7 0v3h1v-3z"/></svg></div>
<div class="a t" style="left:30px;top:274px">YC_&nbsp;9</div>
<div class="a rc" style="left:100px;top:266px;width:70px;height:28px;background:#f0f8f8"></div>
<div class="a rc" style="left:170px;top:266px;width:100px;height:28px;background:#f0f8f8"></div>
<div class="a rc" style="left:270px;top:266px;width:80px;height:28px;background:#f0f8f8"></div>
<div class="a rc" style="left:350px;top:266px;width:60px;height:28px;background:#f0f8f8"></div>
<div class="a t" style="left:275px;top:274px">1.00000</div>
<div class="a t" style="left:354px;top:274px">4009H</div>
<div class="a hc" style="left:0;top:294px;width:100px;height:28px"></div>
<div class="a cb4" style="left:4px;top:298px"><svg class="ckp" width="8" height="8" viewBox="0 0 8 8" shape-rendering="crispEdges"><path d="M0 3v3h1v-3zM1 4v3h1v-3zM2 5v3h1v-3zM3 4v3h1v-3zM4 3v3h1v-3zM5 2v3h1v-3zM6 1v3h1v-3zM7 0v3h1v-3z"/></svg></div>
<div class="a t" style="left:30px;top:302px">YC_10</div>
<div class="a rc" style="left:100px;top:294px;width:70px;height:28px;background:#f8f8f8"></div>
<div class="a rc" style="left:170px;top:294px;width:100px;height:28px;background:#f8f8f8"></div>
<div class="a rc" style="left:270px;top:294px;width:80px;height:28px;background:#f8f8f8"></div>
<div class="a rc" style="left:350px;top:294px;width:60px;height:28px;background:#f8f8f8"></div>
<div class="a t" style="left:275px;top:302px">1.00000</div>
<div class="a t" style="left:354px;top:302px">400AH</div>
<div class="a hc" style="left:0;top:322px;width:100px;height:28px"></div>
<div class="a cb4" style="left:4px;top:326px"><svg class="ckp" width="8" height="8" viewBox="0 0 8 8" shape-rendering="crispEdges"><path d="M0 3v3h1v-3zM1 4v3h1v-3zM2 5v3h1v-3zM3 4v3h1v-3zM4 3v3h1v-3zM5 2v3h1v-3zM6 1v3h1v-3zM7 0v3h1v-3z"/></svg></div>
<div class="a t" style="left:30px;top:330px">YC_11</div>
<div class="a rc" style="left:100px;top:322px;width:70px;height:28px;background:#f0f8f8"></div>
<div class="a rc" style="left:170px;top:322px;width:100px;height:28px;background:#f0f8f8"></div>
<div class="a rc" style="left:270px;top:322px;width:80px;height:28px;background:#f0f8f8"></div>
<div class="a rc" style="left:350px;top:322px;width:60px;height:28px;background:#f0f8f8"></div>
<div class="a t" style="left:275px;top:330px">1.00000</div>
<div class="a t" style="left:354px;top:330px">400BH</div>
<div class="a hc" style="left:0;top:350px;width:100px;height:28px"></div>
<div class="a cb4" style="left:4px;top:354px"><svg class="ckp" width="8" height="8" viewBox="0 0 8 8" shape-rendering="crispEdges"><path d="M0 3v3h1v-3zM1 4v3h1v-3zM2 5v3h1v-3zM3 4v3h1v-3zM4 3v3h1v-3zM5 2v3h1v-3zM6 1v3h1v-3zM7 0v3h1v-3z"/></svg></div>
<div class="a t" style="left:30px;top:358px">YC_12</div>
<div class="a rc" style="left:100px;top:350px;width:70px;height:28px;background:#f8f8f8"></div>
<div class="a rc" style="left:170px;top:350px;width:100px;height:28px;background:#f8f8f8"></div>
<div class="a rc" style="left:270px;top:350px;width:80px;height:28px;background:#f8f8f8"></div>
<div class="a rc" style="left:350px;top:350px;width:60px;height:28px;background:#f8f8f8"></div>
<div class="a t" style="left:275px;top:358px">1.00000</div>
<div class="a t" style="left:354px;top:358px">400CH</div>
<div class="a hc" style="left:0;top:378px;width:100px;height:28px"></div>
<div class="a cb4" style="left:4px;top:382px"><svg class="ckp" width="8" height="8" viewBox="0 0 8 8" shape-rendering="crispEdges"><path d="M0 3v3h1v-3zM1 4v3h1v-3zM2 5v3h1v-3zM3 4v3h1v-3zM4 3v3h1v-3zM5 2v3h1v-3zM6 1v3h1v-3zM7 0v3h1v-3z"/></svg></div>
<div class="a t" style="left:30px;top:386px">YC_13</div>
<div class="a rc" style="left:100px;top:378px;width:70px;height:28px;background:#f0f8f8"></div>
<div class="a rc" style="left:170px;top:378px;width:100px;height:28px;background:#f0f8f8"></div>
<div class="a rc" style="left:270px;top:378px;width:80px;height:28px;background:#f0f8f8"></div>
<div class="a rc" style="left:350px;top:378px;width:60px;height:28px;background:#f0f8f8"></div>
<div class="a t" style="left:275px;top:386px">1.00000</div>
<div class="a t" style="left:354px;top:386px">400DH</div>
<div class="a hc" style="left:0;top:406px;width:100px;height:28px"></div>
<div class="a cb4" style="left:4px;top:410px"><svg class="ckp" width="8" height="8" viewBox="0 0 8 8" shape-rendering="crispEdges"><path d="M0 3v3h1v-3zM1 4v3h1v-3zM2 5v3h1v-3zM3 4v3h1v-3zM4 3v3h1v-3zM5 2v3h1v-3zM6 1v3h1v-3zM7 0v3h1v-3z"/></svg></div>
<div class="a t" style="left:30px;top:414px">YC_14</div>
<div class="a rc" style="left:100px;top:406px;width:70px;height:28px;background:#f8f8f8"></div>
<div class="a rc" style="left:170px;top:406px;width:100px;height:28px;background:#f8f8f8"></div>
<div class="a rc" style="left:270px;top:406px;width:80px;height:28px;background:#f8f8f8"></div>
<div class="a rc" style="left:350px;top:406px;width:60px;height:28px;background:#f8f8f8"></div>
<div class="a t" style="left:275px;top:414px">1.00000</div>
<div class="a t" style="left:354px;top:414px">400EH</div>
<div class="a hc" style="left:0;top:434px;width:100px;height:28px"></div>
<div class="a cb4" style="left:4px;top:438px"><svg class="ckp" width="8" height="8" viewBox="0 0 8 8" shape-rendering="crispEdges"><path d="M0 3v3h1v-3zM1 4v3h1v-3zM2 5v3h1v-3zM3 4v3h1v-3zM4 3v3h1v-3zM5 2v3h1v-3zM6 1v3h1v-3zM7 0v3h1v-3z"/></svg></div>
<div class="a t" style="left:30px;top:442px">YC_15</div>
<div class="a rc" style="left:100px;top:434px;width:70px;height:28px;background:#f0f8f8"></div>
<div class="a rc" style="left:170px;top:434px;width:100px;height:28px;background:#f0f8f8"></div>
<div class="a rc" style="left:270px;top:434px;width:80px;height:28px;background:#f0f8f8"></div>
<div class="a rc" style="left:350px;top:434px;width:60px;height:28px;background:#f0f8f8"></div>
<div class="a t" style="left:275px;top:442px">1.00000</div>
<div class="a t" style="left:354px;top:442px">400FH</div>
<div class="a hc" style="left:0;top:462px;width:100px;height:28px"></div>
<div class="a cb4" style="left:4px;top:466px"><svg class="ckp" width="8" height="8" viewBox="0 0 8 8" shape-rendering="crispEdges"><path d="M0 3v3h1v-3zM1 4v3h1v-3zM2 5v3h1v-3zM3 4v3h1v-3zM4 3v3h1v-3zM5 2v3h1v-3zM6 1v3h1v-3zM7 0v3h1v-3z"/></svg></div>
<div class="a t" style="left:30px;top:470px">YC_16</div>
<div class="a rc" style="left:100px;top:462px;width:70px;height:28px;background:#f8f8f8"></div>
<div class="a rc" style="left:170px;top:462px;width:100px;height:28px;background:#f8f8f8"></div>
<div class="a rc" style="left:270px;top:462px;width:80px;height:28px;background:#f8f8f8"></div>
<div class="a rc" style="left:350px;top:462px;width:60px;height:28px;background:#f8f8f8"></div>
<div class="a t" style="left:275px;top:470px">1.00000</div>
<div class="a t" style="left:354px;top:470px">4010H</div>
<div class="a hc" style="left:0;top:490px;width:100px;height:28px"></div>
<div class="a cb4" style="left:4px;top:494px"><svg class="ckp" width="8" height="8" viewBox="0 0 8 8" shape-rendering="crispEdges"><path d="M0 3v3h1v-3zM1 4v3h1v-3zM2 5v3h1v-3zM3 4v3h1v-3zM4 3v3h1v-3zM5 2v3h1v-3zM6 1v3h1v-3zM7 0v3h1v-3z"/></svg></div>
<div class="a t" style="left:30px;top:498px">YC_17</div>
<div class="a rc" style="left:100px;top:490px;width:70px;height:28px;background:#f0f8f8"></div>
<div class="a rc" style="left:170px;top:490px;width:100px;height:28px;background:#f0f8f8"></div>
<div class="a rc" style="left:270px;top:490px;width:80px;height:28px;background:#f0f8f8"></div>
<div class="a rc" style="left:350px;top:490px;width:60px;height:28px;background:#f0f8f8"></div>
<div class="a t" style="left:275px;top:498px">1.00000</div>
<div class="a t" style="left:354px;top:498px">4011H</div>
<div class="a hc" style="left:0;top:518px;width:100px;height:28px"></div>
<div class="a cb4" style="left:4px;top:522px"><svg class="ckp" width="8" height="8" viewBox="0 0 8 8" shape-rendering="crispEdges"><path d="M0 3v3h1v-3zM1 4v3h1v-3zM2 5v3h1v-3zM3 4v3h1v-3zM4 3v3h1v-3zM5 2v3h1v-3zM6 1v3h1v-3zM7 0v3h1v-3z"/></svg></div>
<div class="a t" style="left:30px;top:526px">YC_18</div>
<div class="a rc" style="left:100px;top:518px;width:70px;height:28px;background:#f8f8f8"></div>
<div class="a rc" style="left:170px;top:518px;width:100px;height:28px;background:#f8f8f8"></div>
<div class="a rc" style="left:270px;top:518px;width:80px;height:28px;background:#f8f8f8"></div>
<div class="a rc" style="left:350px;top:518px;width:60px;height:28px;background:#f8f8f8"></div>
<div class="a t" style="left:275px;top:526px">1.00000</div>
<div class="a t" style="left:354px;top:526px">4012H</div>
<div class="a hc" style="left:0;top:546px;width:100px;height:28px"></div>
<div class="a cb4" style="left:4px;top:550px"><svg class="ckp" width="8" height="8" viewBox="0 0 8 8" shape-rendering="crispEdges"><path d="M0 3v3h1v-3zM1 4v3h1v-3zM2 5v3h1v-3zM3 4v3h1v-3zM4 3v3h1v-3zM5 2v3h1v-3zM6 1v3h1v-3zM7 0v3h1v-3z"/></svg></div>
<div class="a t" style="left:30px;top:554px">YC_19</div>
<div class="a rc" style="left:100px;top:546px;width:70px;height:28px;background:#f0f8f8"></div>
<div class="a rc" style="left:170px;top:546px;width:100px;height:28px;background:#f0f8f8"></div>
<div class="a rc" style="left:270px;top:546px;width:80px;height:28px;background:#f0f8f8"></div>
<div class="a rc" style="left:350px;top:546px;width:60px;height:28px;background:#f0f8f8"></div>
<div class="a t" style="left:275px;top:554px">1.00000</div>
<div class="a t" style="left:354px;top:554px">4013H</div>
<div class="a hc" style="left:0;top:574px;width:100px;height:28px"></div>
<div class="a cb4" style="left:4px;top:578px"><svg class="ckp" width="8" height="8" viewBox="0 0 8 8" shape-rendering="crispEdges"><path d="M0 3v3h1v-3zM1 4v3h1v-3zM2 5v3h1v-3zM3 4v3h1v-3zM4 3v3h1v-3zM5 2v3h1v-3zM6 1v3h1v-3zM7 0v3h1v-3z"/></svg></div>
<div class="a t" style="left:30px;top:582px">YC_20</div>
<div class="a rc" style="left:100px;top:574px;width:70px;height:28px;background:#f8f8f8"></div>
<div class="a rc" style="left:170px;top:574px;width:100px;height:28px;background:#f8f8f8"></div>
<div class="a rc" style="left:270px;top:574px;width:80px;height:28px;background:#f8f8f8"></div>
<div class="a rc" style="left:350px;top:574px;width:60px;height:28px;background:#f8f8f8"></div>
<div class="a t" style="left:275px;top:582px">1.00000</div>
<div class="a t" style="left:354px;top:582px">4014H</div>
</div>
<div class="a" style="left:995px;top:64px;width:17px;height:581px;background:#f0f0f0"></div>
<div class="a" style="left:996px;top:81px;width:15px;height:41px;background:#cdcdcd"></div>
<svg class="a" style="left:999px;top:70px" width="9" height="7" viewBox="0 0 9 7"><path d="M1 5.6L4.5 2L8 5.6" stroke="#585858" stroke-width="2" fill="none"/></svg>
<svg class="a" style="left:999px;top:633px" width="9" height="7" viewBox="0 0 9 7"><path d="M1 1.4L4.5 5L8 1.4" stroke="#585858" stroke-width="2" fill="none"/></svg>
<div class="a btn" style="left:593px;top:676px;width:88px;height:36px;line-height:35px">导入文件</div>
<div class="a btn" style="left:712px;top:676px;width:88px;height:36px;line-height:35px">复制点表</div>
<div class="a btn" style="left:820px;top:676px;width:88px;height:36px;line-height:35px">表格清空</div>
</body></html>
